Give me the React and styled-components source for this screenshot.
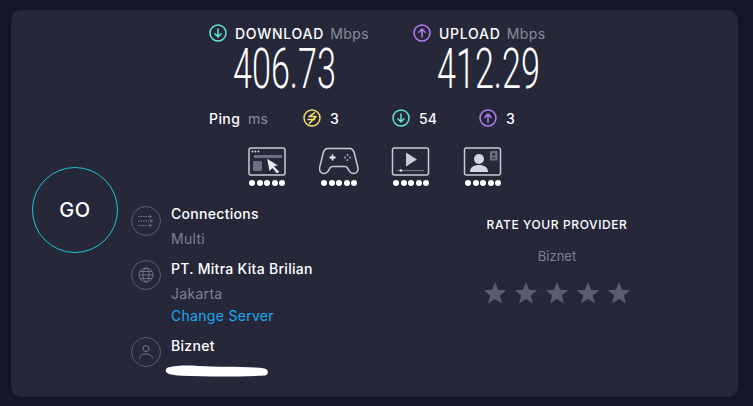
import styled, { createGlobalStyle } from 'styled-components';

const Global = createGlobalStyle`
  html, body {
    margin: 0;
    background: #141526;
    font-family: Inter, "Open Sans", sans-serif;
  }
  * { box-sizing: border-box; }
`;

const Page = styled.div`
  width: 753px;
  height: 406px;
  padding: 10px 15px 9px 11px;
  overflow: hidden;
`;

const Panel = styled.div`
  height: 387px;
  background: #26283a;
  border-radius: 10px;
  color: #fff;
  padding-top: 13px;
`;

const Speeds = styled.div`
  display: flex;
  margin-left: 198px;
`;

const SpeedCol = styled.div`
  width: 204px;
`;

const SpeedHead = styled.div`
  display: flex;
  align-items: center;
  height: 20px;
  font-size: 14px;
`;

const Label = styled.span`
  font-weight: 500;
  margin-left: 8px;
  letter-spacing: 0.75px;
`;

const Unit = styled.span`
  color: #8a8b9c;
  margin-left: 6px;
  letter-spacing: 0.45px;
`;

const Value = styled.div`
  font-family: Roboto, sans-serif;
  font-weight: 300;
  font-size: 56px;
  line-height: 50px;
  height: 50px;
  margin-top: 1px;
  margin-left: ${({ $indent }) => $indent}px;
  transform: scaleX(0.61);
  transform-origin: left center;
  white-space: nowrap;
`;

const PingRow = styled.div`
  display: flex;
  align-items: center;
  height: 20px;
  margin: 14px 0 0 198px;
  font-size: 14px;
`;

const PingLabel = styled.span`
  width: 32px;
  font-weight: 500;
  letter-spacing: 0.4px;
`;

const PingUnit = styled.span`
  width: 55px;
  margin-left: 7px;
  color: #8a8b9c;
  letter-spacing: 0.3px;
`;

const PingItem = styled.div`
  display: flex;
  align-items: center;
  gap: 9px;
  width: ${({ $w }) => $w}px;
  font-weight: 500;
`;

const Experience = styled.div`
  display: flex;
  gap: 32px;
  margin: 19px 0 0 236px;
`;

const ExpItem = styled.div`
  width: 40px;
  display: flex;
  flex-direction: column;
  align-items: center;
`;

const Dots = styled.div`
  display: flex;
  gap: 1.5px;
  margin-top: 3px;
`;

const Dot = styled.span`
  width: 6px;
  height: 6px;
  border-radius: 50%;
  background: #fff;
`;

const Bottom = styled.div`
  display: flex;
  margin-top: 18px;
`;

const GoColumn = styled.div`
  width: 120px;
  padding-left: 21px;
`;

const GoButton = styled.div`
  width: 86px;
  height: 86px;
  margin-top: -37px;
  border-radius: 50%;
  border: 1px solid #1fc4d6;
  display: flex;
  align-items: center;
  justify-content: center;
  font-size: 20px;
  font-weight: 500;
  letter-spacing: 0.5px;
`;

const InfoColumn = styled.div`
  width: 295px;
`;

const InfoRow = styled.div`
  display: flex;
  gap: 10px;
  margin-bottom: ${({ $gap }) => $gap || 0}px;
`;

const Circle = styled.div`
  width: 30px;
  height: 30px;
  flex: none;
  margin-top: ${({ $top }) => $top}px;
  border: 1px solid #5b5c6e;
  border-radius: 50%;
  display: flex;
  align-items: center;
  justify-content: center;
  color: #7f8091;
`;

const InfoText = styled.div`
  font-size: 14px;
  line-height: 20px;
`;

const InfoTitle = styled.div`
  font-weight: 500;
  letter-spacing: 0.3px;
  color: #fff;
`;

const InfoSub = styled.div`
  color: #7f8093;
  letter-spacing: 0.3px;
  margin-top: ${({ $top }) => $top || 5}px;
`;

const ChangeLink = styled.a`
  display: block;
  color: #1aa9f5;
  letter-spacing: 0.3px;
  margin-top: 2px;
`;

const Redacted = styled.svg`
  display: block;
  margin: 9px 0 0 -6px;
`;

const RateColumn = styled.div`
  width: 262px;
  display: flex;
  flex-direction: column;
  align-items: center;
  padding-top: 12px;
`;

const RateTitle = styled.div`
  font-size: 12px;
  font-weight: 500;
  line-height: 18px;
  letter-spacing: 0.6px;
`;

const RateName = styled.div`
  font-size: 13px;
  line-height: 16px;
  color: #7f8093;
  margin-top: 14px;
`;

const Stars = styled.div`
  display: flex;
  gap: 7px;
  margin-top: 17px;
`;

const Arrow = ({ color, up }) => (
  <svg width="18" height="18" viewBox="0 0 18 18" fill="none" stroke={color} strokeWidth="1.5" strokeLinecap="round" strokeLinejoin="round">
    <circle cx="9" cy="9" r="8" />
    {up ? <path d="M9 13V5.2M5.9 8.2 9 5.1l3.1 3.1" /> : <path d="M9 5v7.8M5.9 9.8 9 12.9l3.1-3.1" />}
  </svg>
);

const PingIcon = () => (
  <svg width="18" height="18" viewBox="0 0 18 18" fill="none" stroke="#f5dc6a" strokeWidth="1.5" strokeLinecap="round" strokeLinejoin="round">
    <circle cx="9" cy="9" r="8" />
    <path d="M11.500 3.800 6 7.600h7L6.500 14.200M5 10.400h6.500" />
  </svg>
);

const WebIcon = () => (
  <svg width="40" height="30" viewBox="0 0 40 30" fill="none">
    <rect x="2" y="1" width="36" height="27" rx="2" stroke="#c9cad6" strokeWidth="1.5" />
    <circle cx="5.500" cy="4.500" r="0.900" fill="#e4e5ec" />
    <circle cx="8.500" cy="4.500" r="0.900" fill="#e4e5ec" />
    <circle cx="11.500" cy="4.500" r="0.900" fill="#e4e5ec" />
    <rect x="7" y="8" width="28" height="3" fill="#6e6f80" />
    <rect x="6" y="14" width="9" height="10" rx="1" fill="#6e6f80" />
    <path d="M19.500 11 32 18.500l-4.400 1 5 5.300-2.600 2.200-4.600-5.400-3.200 3.400z" fill="#e8e9ef" stroke="#26283a" strokeWidth="1" />
  </svg>
);

const GameIcon = () => (
  <svg width="40" height="30" viewBox="0 0 40 30" fill="none">
    <path d="M9 1.500h22c2 0 3 1 4 3.500l3.800 15c.8 3.500-1 6.500-4.300 6.500-2 0-3.500-1-4.500-3l-1.500-2.500c-.6-1-1.400-1.500-2.500-1.500h-12.500c-1.100 0-1.900.5-2.500 1.500l-1.500 2.500c-1 2-2.500 3-4.500 3-3.300 0-5.100-3-4.300-6.500l3.800-15c1-2.500 2-3.500 4-3.500z" stroke="#c9cad6" strokeWidth="1.500" />
    <path d="M13.500 7.500v6M10.500 10.500h6" stroke="#e8e9ef" strokeWidth="1.800" />
    <circle cx="28.500" cy="8" r="1" fill="#a8a9b8" />
    <circle cx="28.500" cy="13" r="1" fill="#a8a9b8" />
    <circle cx="26" cy="10.500" r="1" fill="#a8a9b8" />
    <circle cx="31" cy="10.500" r="1" fill="#a8a9b8" />
  </svg>
);

const VideoIcon = () => (
  <svg width="40" height="30" viewBox="0 0 40 30" fill="none">
    <rect x="1.500" y="1" width="36" height="27" rx="2" stroke="#c9cad6" strokeWidth="1.500" />
    <path d="M15 5.500 26 12.500 15 19.500z" fill="#c9cad6" />
    <path d="M6 23.500h27" stroke="#6e6f80" strokeWidth="1.200" />
    <circle cx="10" cy="23.500" r="1.300" fill="#e8e9ef" />
  </svg>
);

const UserIcon = () => (
  <svg width="40" height="30" viewBox="0 0 40 30" fill="none">
    <rect x="1.500" y="1" width="36" height="27" rx="2" stroke="#c9cad6" strokeWidth="1.500" />
    <circle cx="16" cy="12" r="5" fill="#d5d6e0" />
    <path d="M7 25c0-5 4-7 9-7s9 2 9 7z" fill="#d5d6e0" />
    <rect x="27" y="4" width="7.500" height="9.500" rx="0.500" fill="#6e6f80" />
    <circle cx="30.700" cy="7.500" r="1.400" fill="#26283a" />
    <path d="M28.500 11.500c0-1.500 4.500-1.500 4.500 0z" fill="#26283a" />
  </svg>
);

const Star = () => (
  <svg width="24" height="24" viewBox="0 0 24 24" fill="#5b5c6e">
    <path d="M12 1l3 7.800 8.300.5-6.500 5.200 2.200 8.100L12 18l-7 4.600 2.200-8.100L.7 9.300 9 8.800z" />
  </svg>
);

const experiences = [WebIcon, GameIcon, VideoIcon, UserIcon];

export default function App() {
  return (
    <>
      <Global />
      <Page>
        <Panel>
          <Speeds>
            <SpeedCol>
              <SpeedHead>
                <Arrow color="#5fe6d8" />
                <Label>DOWNLOAD</Label>
                <Unit>Mbps</Unit>
              </SpeedHead>
              <Value $indent={24}>406.73</Value>
            </SpeedCol>
            <SpeedCol>
              <SpeedHead>
                <Arrow color="#b77df0" up />
                <Label>UPLOAD</Label>
                <Unit>Mbps</Unit>
              </SpeedHead>
              <Value $indent={24}>412.29</Value>
            </SpeedCol>
          </Speeds>
          <PingRow>
            <PingLabel>Ping</PingLabel>
            <PingUnit>ms</PingUnit>
            <PingItem $w={89}><PingIcon />3</PingItem>
            <PingItem $w={87}><Arrow color="#5fe6d8" />54</PingItem>
            <PingItem $w={60}><Arrow color="#b77df0" up />3</PingItem>
          </PingRow>
          <Experience>
            {experiences.map((Icon, i) => (
              <ExpItem key={i}>
                <Icon />
                <Dots>
                  {[0, 1, 2, 3, 4].map((d) => <Dot key={d} />)}
                </Dots>
              </ExpItem>
            ))}
          </Experience>
          <Bottom>
            <GoColumn>
              <GoButton>GO</GoButton>
            </GoColumn>
            <InfoColumn>
              <InfoRow $gap={10}>
                <Circle $top={2}>
                  <svg width="16" height="14" viewBox="0 0 16 14" fill="none" stroke="currentColor" strokeWidth="0.900">
                    <path d="M0 2.500h13M0 7h14M0 11.500h13" strokeDasharray="1.500 1" />
                    <path d="M11.500 1l2 1.500-2 1.500M12.500 5.500l2 1.500-2 1.500M11.500 10l2 1.500-2 1.500" />
                  </svg>
                </Circle>
                <InfoText>
                  <InfoTitle>Connections</InfoTitle>
                  <InfoSub>Multi</InfoSub>
                </InfoText>
              </InfoRow>
              <InfoRow $gap={10}>
                <Circle $top={1}>
                  <svg width="16" height="16" viewBox="0 0 16 16" fill="none" stroke="currentColor" strokeWidth="0.800">
                    <circle cx="8" cy="8" r="7" />
                    <ellipse cx="8" cy="8" rx="3" ry="7" />
                    <path d="M1 8h14M2 4.500h12M2 11.500h12" />
                  </svg>
                </Circle>
                <InfoText>
                  <InfoTitle>PT. Mitra Kita Brilian</InfoTitle>
                  <InfoSub>Jakarta</InfoSub>
                  <ChangeLink>Change Server</ChangeLink>
                </InfoText>
              </InfoRow>
              <InfoRow>
                <Circle $top={1}>
                  <svg width="16" height="16" viewBox="0 0 16 16" fill="none" stroke="currentColor" strokeWidth="0.900">
                    <circle cx="8" cy="4.500" r="3" />
                    <path d="M1.500 14.500c0-3 3-4.500 6.500-4.500s6.500 1.500 6.500 4.500" />
                  </svg>
                </Circle>
                <InfoText>
                  <InfoTitle>Biznet</InfoTitle>
                  <Redacted width="104" height="12" viewBox="0 0 106 12" preserveAspectRatio="none">
                    <path d="M3 2.500C12 .5 22 0 34 1c18 1 40 .5 58 1.500 5 .3 9 .5 11.500 2 2 1.500 2 5-1.500 6-25 1.200-58 1.200-85 .2C8 10 2 9.500 1 6.500c-.5-1.800.3-3.300 2-4z" fill="#fff" />
                  </Redacted>
                </InfoText>
              </InfoRow>
            </InfoColumn>
            <RateColumn>
              <RateTitle>RATE YOUR PROVIDER</RateTitle>
              <RateName>Biznet</RateName>
              <Stars>
                {[0, 1, 2, 3, 4].map((s) => <Star key={s} />)}
              </Stars>
            </RateColumn>
          </Bottom>
        </Panel>
      </Page>
    </>
  );
}
